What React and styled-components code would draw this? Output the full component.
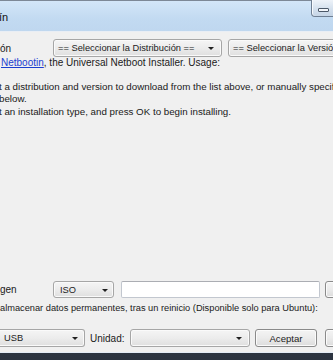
import styled, { createGlobalStyle } from "styled-components";

const GlobalStyle = createGlobalStyle`
  html, body {
    margin: 0;
    padding: 0;
    width: 333px;
    height: 360px;
    overflow: hidden;
    background: linear-gradient(#414b58, #2c3440);
    font-family: "Liberation Sans", Arial, sans-serif;
    font-size: 10px;
    color: #1a1a1a;
  }
`;

const Window = styled.div`
  width: 333px;
  height: 353px;
  display: flex;
  flex-direction: column;
  overflow: hidden;
  background: linear-gradient(#bcd4ed, #b2cce8);
`;

const TitleBar = styled.div`
  position: relative;
  height: 30px;
  flex: none;
  display: flex;
  align-items: center;
  border-top: 1px solid #7d8896;
  background: linear-gradient(#d3e6f8, #c2daf1 60%, #bfd7ef);
  font-size: 11px;
  color: #111;
`;

const TitleText = styled.span`
  margin-left: -1px;
  margin-top: 1px;
`;

const CaptionButton = styled.div`
  position: absolute;
  top: -1px;
  left: 311px;
  width: 30px;
  height: 17px;
  box-sizing: border-box;
  border: 1px solid #6f7f93;
  border-top: none;
  border-bottom-left-radius: 4px;
  background: linear-gradient(#eef3f9, #d5e1ee 55%, #c6d5e6);
  box-shadow: inset 1px 0 0 #f7fafd;
`;

const MinGlyph = styled.div`
  position: absolute;
  left: 6px;
  top: 8px;
  width: 9px;
  height: 2px;
  border: 1px solid #4b5868;
  background: #f4f7fb;
  border-radius: 1px;
`;

const Client = styled.div`
  flex: 1;
  display: flex;
  flex-direction: column;
  background: #f0f0f0;
  border-top: 1px solid #e9eef5;
  border-bottom: 1px solid #e4ecf6;
  padding-top: 7px;
  padding-bottom: 5px;
`;

const Row = styled.div`
  display: flex;
  align-items: center;
  height: ${(p) => p.$h || 18}px;
  margin-top: ${(p) => p.$mt || 0}px;
  white-space: nowrap;
`;

const Label = styled.span`
  width: ${(p) => p.$w}px;
  flex: none;
  margin-left: ${(p) => p.$ml || 0}px;
`;

const Combo = styled.div`
  position: relative;
  flex: none;
  width: ${(p) => p.$w}px;
  height: ${(p) => p.$h || 18}px;
  margin-left: ${(p) => p.$ml || 0}px;
  box-sizing: border-box;
  border: 1px solid #a6a6a6;
  border-radius: 3px;
  background: linear-gradient(#f5f5f5, #ececec 50%, #dfdfdf);
  box-shadow: inset 0 0 0 1px #fafafa;
  display: flex;
  align-items: center;
  padding-left: ${(p) => p.$pl || 3}px;
  font-size: 9.3px;
  color: #222;
  overflow: hidden;
  ${(p) => p.$noLeft && "border-left: none; border-radius: 0 3px 3px 0;"}

  &::after {
    content: "";
    display: ${(p) => (p.$arrow === false ? "none" : "block")};
    position: absolute;
    right: ${(p) => p.$ar || 7}px;
    top: 50%;
    margin-top: -1px;
    border-left: 3px solid transparent;
    border-right: 3px solid transparent;
    border-top: 3px solid #202020;
  }
`;

const TextInput = styled.div`
  flex: none;
  width: ${(p) => p.$w}px;
  height: 17px;
  margin-left: ${(p) => p.$ml || 0}px;
  box-sizing: border-box;
  border: 1px solid #c2c7cf;
  border-top-color: #abadb3;
  border-radius: 2px;
  background: #fff;
`;

const Button = styled.div`
  flex: none;
  width: ${(p) => p.$w}px;
  height: ${(p) => p.$h || 18}px;
  margin-left: ${(p) => p.$ml || 0}px;
  box-sizing: border-box;
  border: 1px solid #8a8a8a;
  border-radius: 3px;
  background: linear-gradient(#f4f4f4, #ebebeb 50%, #dcdcdc);
  box-shadow: inset 0 0 0 1px #fbfbfb;
  display: flex;
  align-items: center;
  justify-content: center;
  font-size: 9.6px;
  color: #222;
`;

const Info = styled.div`
  line-height: 12.5px;
  white-space: nowrap;
`;

const Intro = styled.p`
  margin: 0;
  padding-left: 1px;
`;

const Link = styled.span`
  color: #1b3fd0;
  text-decoration: underline;
`;

const Steps = styled.div`
  margin-top: 11px;
  font-size: 9.75px;
`;

const Line = styled.div`
  margin-left: ${(p) => p.$ml || 0}px;
`;

const Bottom = styled.div`
  margin-top: auto;
`;

const Note = styled.div`
  margin-top: 4px;
  height: 12px;
  line-height: 12px;
  font-size: 9.25px;
  white-space: nowrap;
`;

export default function App() {
  return (
    <>
      <GlobalStyle />
      <Window>
        <TitleBar>
          <TitleText>ín</TitleText>
          <CaptionButton>
            <MinGlyph />
          </CaptionButton>
        </TitleBar>
        <Client>
          <Row>
            <Label $w={53}>ón</Label>
            <Combo $w={169} $pl={4} $ar={7}>== Seleccionar la Distribución ==</Combo>
            <Combo $w={112} $ml={6} $pl={4} $arrow={false}>== Seleccionar la Versión ==</Combo>
          </Row>
          <Info>
            <Intro>
              <Link>Netbootin</Link>, the Universal Netboot Installer. Usage:
            </Intro>
            <Steps>
              <Line $ml={-1}>t a distribution and version to download from the list above, or manually specify files to load</Line>
              <Line $ml={-1}>below.</Line>
              <Line $ml={-1}>t an installation type, and press OK to begin installing.</Line>
            </Steps>
          </Info>
          <Bottom>
            <Row $h={17}>
              <Label $w={53}>gen</Label>
              <Combo $w={61} $h={17} $pl={6} $ar={5}>ISO</Combo>
              <TextInput $w={199} $ml={7} />
              <Button $w={60} $h={17} $ml={5}>...</Button>
            </Row>
            <Note>almacenar datos permanentes, tras un reinicio (Disponible solo para Ubuntu):</Note>
            <Row $mt={15}>
              <Combo $w={87} $ml={-2} $pl={6} $ar={6} $noLeft>USB</Combo>
              <Label $w={40} $ml={5}>Unidad:</Label>
              <Combo $w={120} $pl={4} $ar={7}></Combo>
              <Button $w={62} $ml={5}>Aceptar</Button>
              <Button $w={62} $ml={8}>Salir</Button>
            </Row>
          </Bottom>
        </Client>
      </Window>
    </>
  );
}
